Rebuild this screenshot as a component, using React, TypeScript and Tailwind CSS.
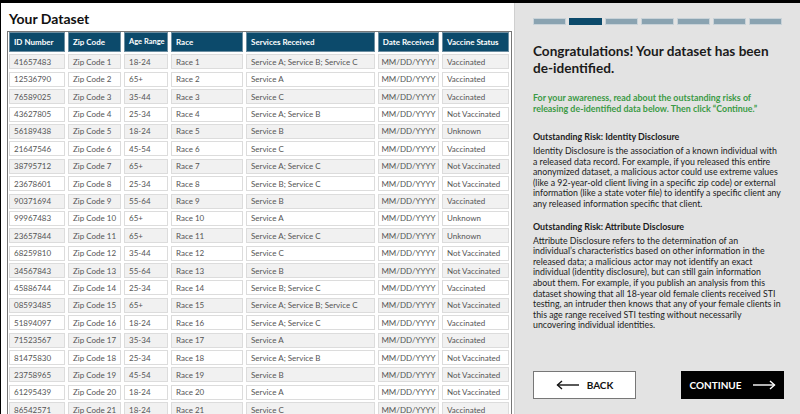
import React from 'react';

const ROWS: string[][] = [
  ['41657483', 'Zip Code 1', '18-24', 'Race 1', 'Service A; Service B; Service C', 'Vaccinated'],
  ['12536790', 'Zip Code 2', '65+', 'Race 2', 'Service A', 'Vaccinated'],
  ['76589025', 'Zip Code 3', '35-44', 'Race 3', 'Service C', 'Vaccinated'],
  ['43627805', 'Zip Code 4', '25-34', 'Race 4', 'Service A; Service B', 'Not Vaccinated'],
  ['56189438', 'Zip Code 5', '18-24', 'Race 5', 'Service B', 'Unknown'],
  ['21647546', 'Zip Code 6', '45-54', 'Race 6', 'Service C', 'Vaccinated'],
  ['38795712', 'Zip Code 7', '65+', 'Race 7', 'Service A; Service C', 'Not Vaccinated'],
  ['23678601', 'Zip Code 8', '25-34', 'Race 8', 'Service B; Service C', 'Not Vaccinated'],
  ['90371694', 'Zip Code 9', '55-64', 'Race 9', 'Service B', 'Vaccinated'],
  ['99967483', 'Zip Code 10', '65+', 'Race 10', 'Service A', 'Unknown'],
  ['23657844', 'Zip Code 11', '65+', 'Race 11', 'Service A; Service C', 'Unknown'],
  ['68259810', 'Zip Code 12', '35-44', 'Race 12', 'Service C', 'Not Vaccinated'],
  ['34567843', 'Zip Code 13', '55-64', 'Race 13', 'Service B', 'Not Vaccinated'],
  ['45886744', 'Zip Code 14', '25-34', 'Race 14', 'Service B; Service C', 'Vaccinated'],
  ['08593485', 'Zip Code 15', '65+', 'Race 15', 'Service A; Service B; Service C', 'Not Vaccinated'],
  ['51894097', 'Zip Code 16', '18-24', 'Race 16', 'Service A; Service C', 'Vaccinated'],
  ['71523567', 'Zip Code 17', '35-34', 'Race 17', 'Service A', 'Vaccinated'],
  ['81475830', 'Zip Code 18', '25-34', 'Race 18', 'Service A; Service B', 'Not Vaccinated'],
  ['23758965', 'Zip Code 19', '45-54', 'Race 19', 'Service B', 'Not Vaccinated'],
  ['61295439', 'Zip Code 20', '18-24', 'Race 20', 'Service A', 'Not Vaccinated'],
  ['86542571', 'Zip Code 21', '18-24', 'Race 21', 'Service C', 'Vaccinated'],
];

const HEADERS = ['ID Number', 'Zip Code', 'Age Range', 'Race', 'Services Received', 'Date Received', 'Vaccine Status'];

const Arrow = ({ dir, color }: { dir: 'left' | 'right'; color: string }) => (
  <svg width="24" height="10" viewBox="0 0 24 10" fill="none" stroke={color} strokeWidth="1.4">
    {dir === 'left' ? (
      <>
        <line x1="1.5" y1="5" x2="23" y2="5" />
        <polyline points="6,1 1.5,5 6,9" />
      </>
    ) : (
      <>
        <line x1="1" y1="5" x2="22.5" y2="5" />
        <polyline points="18,1 22.5,5 18,9" />
      </>
    )}
  </svg>
);

export default function App() {
  return (
    <div className="w-[800px] h-[414px] flex overflow-hidden border-t-[3px] border-l border-black bg-white font-['Lato',sans-serif]">
      {/* Dataset */}
      <div className="w-[513px] shrink-0 pl-[6px] flex flex-col">
        <h1 className="h-[28px] pl-[2px] pt-[7px] text-[14px] leading-[17px] font-bold text-[#111]">Your Dataset</h1>
        <div className="w-[505px] flex-1 overflow-hidden border-t border-x border-[#777] pl-[1px] pr-[2px]">
          <div className="grid grid-cols-[56px_53px_44px_72px_129px_61px_67px] gap-x-[3px] gap-y-[2.4px] text-[8px]">
            {HEADERS.map((h, i) => (
              <div
                key={h}
                className={`h-[20px] flex items-center whitespace-nowrap overflow-hidden bg-[#0c4a6b] border border-[#6d8ea1] text-white font-bold ${i === 5 ? 'justify-center' : 'px-[4px]'} ${i === 2 ? 'text-[7.5px]' : ''}`}
              >
                {h}
              </div>
            ))}
            {ROWS.map((r, ri) => {
              const bg = ri % 2 === 0 ? 'bg-[#f1f1f1]' : 'bg-white';
              const cells = [r[0], r[1], r[2], r[3], r[4], 'MM/DD/YYYY', r[5]];
              return cells.map((c, ci) => (
                <div
                  key={`${ri}-${ci}`}
                  className={`h-[15px] flex items-center border border-[#dcdcdc] ${bg} text-[#555] whitespace-nowrap ${ci === 5 ? 'justify-center' : 'px-[4px]'}`}
                >
                  {c}
                </div>
              ));
            })}
          </div>
        </div>
      </div>

      {/* Info panel */}
      <div className="flex-1 bg-[#e3e3e3] border-l border-[#cfcfcf] pl-[18px] pr-[16px] pt-[15px] flex flex-col text-[#1b1b1b]">
        <div className="flex gap-[3px]">
          {[0, 1, 2, 3, 4, 5, 6].map((i) => (
            <div
              key={i}
              className={`w-[33px] h-[7px] border ${i === 1 ? 'bg-[#0c4a6b] border-[#0c4a6b]' : 'bg-[#8aa3b1] border-[#c8d2d8]'}`}
            />
          ))}
        </div>

        <h2 className="mt-[18px] text-[13.6px] leading-[16.5px] font-bold">
          Congratulations! Your dataset has been<br />de-identified.
        </h2>

        <p className="mt-[16px] text-[8.9px] leading-[11px] font-bold text-[#3b9a45]">
          For your awareness, read about the outstanding risks of<br />
          releasing de-identified data below. Then click “Continue.”
        </p>

        <h3 className="mt-[17px] text-[8.9px] leading-[12px] font-bold">Outstanding Risk: Identity Disclosure</h3>
        <p className="mt-[3px] text-[8.8px] leading-[10.6px] whitespace-nowrap">
          Identity Disclosure is the association of a known individual with<br />
          a released data record. For example, if you released this entire<br />
          anonymized dataset, a malicious actor could use extreme values<br />
          (like a 92-year-old client living in a specific zip code) or external<br />
          information (like a state voter file) to identify a specific client any<br />
          any released information specific that client.
        </p>

        <h3 className="mt-[11px] text-[8.9px] leading-[12px] font-bold">Outstanding Risk: Attribute Disclosure</h3>
        <p className="mt-[3px] text-[8.8px] leading-[10.6px] whitespace-nowrap">
          Attribute Disclosure refers to the determination of an<br />
          individual’s characteristics based on other information in the<br />
          released data; a malicious actor may not identify an exact<br />
          individual (identity disclosure), but can still gain information<br />
          about them. For example, if you publish an analysis from this<br />
          dataset showing that all 18-year old female clients received STI<br />
          testing, an intruder then knows that any of your female clients in<br />
          this age range received STI testing without necessarily<br />
          uncovering individual identities.
        </p>

        <div className="mt-auto mb-[15px] flex justify-between">
          <button className="w-[103px] h-[28px] flex items-center justify-center gap-[7px] bg-white border border-[#777] text-[10px] font-bold text-[#111]">
            <Arrow dir="left" color="#111" />
            BACK
          </button>
          <button className="w-[103px] h-[28px] flex items-center justify-center gap-[10px] bg-black text-[10px] font-bold text-white">
            CONTINUE
            <Arrow dir="right" color="#fff" />
          </button>
        </div>
      </div>
    </div>
  );
}
